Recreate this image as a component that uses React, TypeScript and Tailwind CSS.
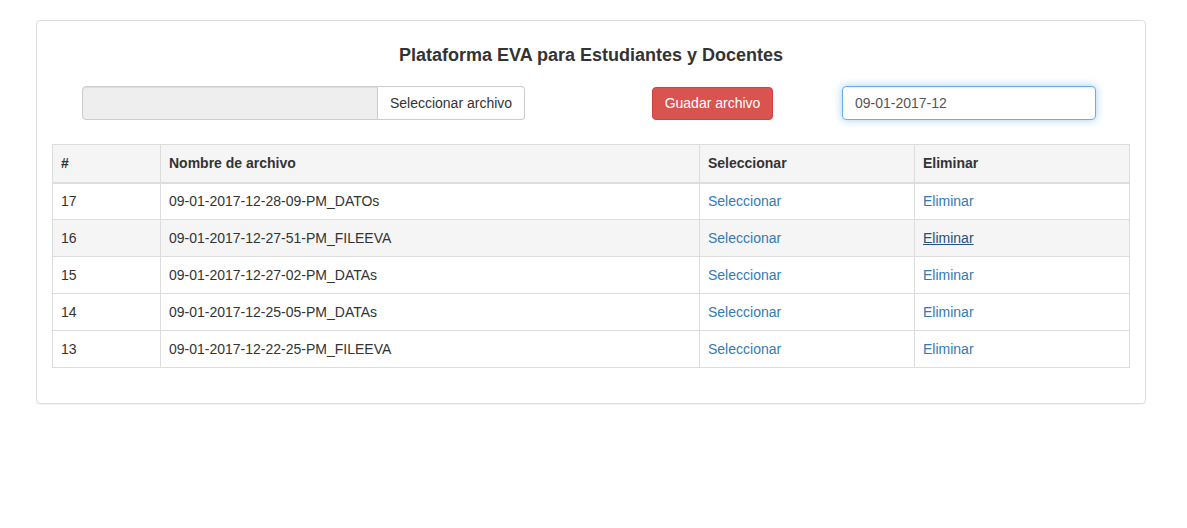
import React from "react";

const rows = [
  { id: 17, name: "09-01-2017-12-28-09-PM_DATOs" },
  { id: 16, name: "09-01-2017-12-27-51-PM_FILEEVA" },
  { id: 15, name: "09-01-2017-12-27-02-PM_DATAs" },
  { id: 14, name: "09-01-2017-12-25-05-PM_DATAs" },
  { id: 13, name: "09-01-2017-12-22-25-PM_FILEEVA" },
];

const App = () => {
  return (
    <div
      className="min-h-[528px] bg-white pt-[20px] px-[36px] text-[14px] text-[#333]"
      style={{ fontFamily: '"Liberation Sans", Arial, sans-serif' }}
    >
      <div className="w-[1110px] rounded-[4px] border border-[#ddd] px-[15px] pt-[22px] pb-[35px] shadow-[0_1px_1px_rgba(0,0,0,0.05)]">
        <h3 className="text-center text-[18px] font-bold leading-[24px] text-[#333]">
          Plataforma EVA para Estudiantes y Docentes
        </h3>

        {/* Upload row */}
        <div className="mt-[19px] flex items-center">
          <div className="ml-[30px] flex h-[34px] w-[443px]">
            <div className="flex-1 rounded-l-[4px] border border-[#ccc] bg-[#eee] shadow-[inset_0_1px_1px_rgba(0,0,0,0.075)]" />
            <button className="h-[34px] w-[147px] whitespace-nowrap rounded-r-[4px] border border-l-0 border-[#ccc] bg-white px-0 text-[14px] text-[#333]">
              Seleccionar archivo
            </button>
          </div>
          <button className="ml-[127px] h-[33px] w-[121px] whitespace-nowrap rounded-[4px] border border-[#d43f3a] bg-[#d9534f] text-[14px] text-white">
            Guadar archivo
          </button>
          <input
            className="ml-[69px] h-[34px] w-[254px] rounded-[4px] border border-[#66afe9] px-[12px] text-[14px] text-[#555] shadow-[inset_0_1px_1px_rgba(0,0,0,0.075),0_0_8px_rgba(102,175,233,0.6)] outline-none"
            defaultValue="09-01-2017-12"
          />
        </div>

        {/* Files table */}
        <table className="mt-[24px] w-full border-collapse border border-[#ddd]">
          <thead>
            <tr className="bg-[#f5f5f5] text-left">
              <th className="h-[38px] w-[108px] border border-b-2 border-[#ddd] px-[8px] font-bold">#</th>
              <th className="w-[539px] border border-b-2 border-[#ddd] px-[8px] font-bold">Nombre de archivo</th>
              <th className="w-[215px] border border-b-2 border-[#ddd] px-[8px] font-bold">Seleccionar</th>
              <th className="border border-b-2 border-[#ddd] px-[8px] font-bold">Eliminar</th>
            </tr>
          </thead>
          <tbody>
            {rows.map((r) => (
              <tr key={r.id} className={r.id === 16 ? "bg-[#f5f5f5]" : "bg-white"}>
                <td className="h-[37px] border border-[#ddd] px-[8px]">{r.id}</td>
                <td className="border border-[#ddd] px-[8px]">{r.name}</td>
                <td className="border border-[#ddd] px-[8px]">
                  <a href="#" className="text-[#337ab7]">Seleccionar</a>
                </td>
                <td className="border border-[#ddd] px-[8px]">
                  <a
                    href="#"
                    className={r.id === 16 ? "text-[#23527c] underline" : "text-[#337ab7]"}
                  >
                    Eliminar
                  </a>
                </td>
              </tr>
            ))}
          </tbody>
        </table>
      </div>
    </div>
  );
};

export default App;
